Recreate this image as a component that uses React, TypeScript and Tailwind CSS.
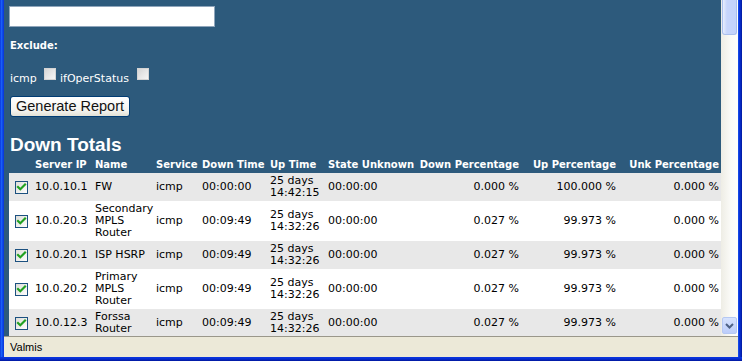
import React from "react";

const rows = [
  { ip: "10.0.10.1", name: "FW", svc: "icmp", down: "00:00:00", up: "25 days 14:42:15", unk: "00:00:00", dp: "0.000 %", upp: "100.000 %", ukp: "0.000 %" },
  { ip: "10.0.20.3", name: "Secondary MPLS Router", svc: "icmp", down: "00:09:49", up: "25 days 14:32:26", unk: "00:00:00", dp: "0.027 %", upp: "99.973 %", ukp: "0.000 %" },
  { ip: "10.0.20.1", name: "ISP HSRP", svc: "icmp", down: "00:09:49", up: "25 days 14:32:26", unk: "00:00:00", dp: "0.027 %", upp: "99.973 %", ukp: "0.000 %" },
  { ip: "10.0.20.2", name: "Primary MPLS Router", svc: "icmp", down: "00:09:49", up: "25 days 14:32:26", unk: "00:00:00", dp: "0.027 %", upp: "99.973 %", ukp: "0.000 %" },
  { ip: "10.0.12.3", name: "Forssa Router", svc: "icmp", down: "00:09:49", up: "25 days 14:32:26", unk: "00:00:00", dp: "0.027 %", upp: "99.973 %", ukp: "0.000 %" },
];

function CheckedBox() {
  return (
    <svg width="13" height="13" viewBox="0 0 13 13" className="block mx-auto">
      <defs>
        <linearGradient id="cbg" x1="0" y1="0" x2="1" y2="1">
          <stop offset="0" stopColor="#dcdcd7" />
          <stop offset="1" stopColor="#ffffff" />
        </linearGradient>
      </defs>
      <rect x="0.5" y="0.5" width="12" height="12" fill="url(#cbg)" stroke="#1c5180" />
      <path d="M3 6 L5.3 8.3 L10 3.6" fill="none" stroke="#21a121" strokeWidth="2.2" strokeLinecap="square" />
    </svg>
  );
}

function PlainBox() {
  return <div className="w-[12px] h-[12px] border border-[#d4d4d4] bg-[linear-gradient(135deg,#d6d6d6,#f6f6f6)]" />;
}

export default function App() {
  const font = { fontFamily: '"DejaVu Sans", Verdana, sans-serif' };
  return (
    <div className="w-[742px] h-[361px] flex flex-col overflow-hidden" style={font}>
      <div className="flex h-[357px]">
        <div className="w-[4px] h-full bg-[linear-gradient(to_right,#0831d9,#1c62f8,#0c48ea,#0a34d6)]" />
        <div className="w-[734px] flex flex-col">
          <div className="flex h-[336px]">
            <div className="w-[717px] h-full overflow-hidden bg-[#2d5a7c] pl-[5px] pt-[6px]">
              <div className="w-[206px] h-[21px] bg-white border border-[#8fa5bb]" />
              <div className="mt-[12px] ml-[1px] text-[10px] leading-[13px] font-bold text-white">Exclude:</div>
              <div className="mt-[16px] ml-[1px] flex items-start text-[11px] text-white h-[17px]">
                <span className="w-[34px] mt-[4px] leading-[13px]">icmp</span>
                <PlainBox />
                <span className="w-[77px] ml-[4px] mt-[4px] leading-[13px]">ifOperStatus</span>
                <PlainBox />
              </div>
              <button
                className="mt-[11px] ml-[1px] w-[120px] h-[21px] rounded-[3px] border border-[#003c74] bg-[linear-gradient(#ffffff,#f4f4f0_70%,#e3e1d6)] text-[14.5px] leading-[19px] text-[#111]"
                style={{ fontFamily: '"Liberation Sans", Arial, sans-serif' }}
              >
                Generate Report
              </button>
              <div
                className="mt-[16px] ml-[1px] text-[19px] leading-[22px] font-bold text-white"
                style={{ fontFamily: '"Liberation Sans", Arial, sans-serif' }}
              >
                Down Totals
              </div>
              <table className="mt-[1px] table-fixed border-collapse w-[712px]">
                <colgroup>
                  <col className="w-[24px]" />
                  <col className="w-[60px]" />
                  <col className="w-[61px]" />
                  <col className="w-[46px]" />
                  <col className="w-[68px]" />
                  <col className="w-[58px]" />
                  <col className="w-[91px]" />
                  <col className="w-[104px]" />
                  <col className="w-[97px]" />
                  <col className="w-[103px]" />
                </colgroup>
                <thead>
                  <tr className="text-white text-[10px] font-bold leading-[12px]">
                    <th className="h-[16px] p-0" />
                    <th className="px-[2px] py-[2px] text-left whitespace-nowrap">Server IP</th>
                    <th className="px-[2px] py-[2px] text-left whitespace-nowrap">Name</th>
                    <th className="px-[2px] py-[2px] text-left whitespace-nowrap">Service</th>
                    <th className="px-[2px] py-[2px] text-left whitespace-nowrap">Down Time</th>
                    <th className="px-[2px] py-[2px] text-left whitespace-nowrap">Up Time</th>
                    <th className="px-[2px] py-[2px] text-left whitespace-nowrap">State Unknown</th>
                    <th className="px-[2px] py-[2px] text-right whitespace-nowrap">Down Percentage</th>
                    <th className="px-[2px] py-[2px] text-right whitespace-nowrap">Up Percentage</th>
                    <th className="px-[2px] py-[2px] text-right whitespace-nowrap">Unk Percentage</th>
                  </tr>
                </thead>
                <tbody className="text-[11px] leading-[12px] text-black">
                  {rows.map((r, i) => (
                    <tr key={r.ip} className={i % 2 === 0 ? "bg-[#e8e8e8]" : "bg-white"}>
                      <td className="p-0 align-middle"><CheckedBox /></td>
                      <td className="px-[2px] py-[2px] align-middle whitespace-nowrap">{r.ip}</td>
                      <td className="px-[2px] py-[2px] align-middle">{r.name}</td>
                      <td className="px-[2px] py-[2px] align-middle">{r.svc}</td>
                      <td className="px-[2px] py-[2px] align-middle">{r.down}</td>
                      <td className="px-[2px] py-[2px] align-middle">{r.up}</td>
                      <td className="px-[2px] py-[2px] align-middle">{r.unk}</td>
                      <td className="px-[2px] py-[2px] align-middle text-right whitespace-nowrap">{r.dp}</td>
                      <td className="px-[2px] py-[2px] align-middle text-right whitespace-nowrap">{r.upp}</td>
                      <td className="px-[2px] py-[2px] align-middle text-right whitespace-nowrap">{r.ukp}</td>
                    </tr>
                  ))}
                </tbody>
              </table>
            </div>
            <div className="w-[17px] h-full flex flex-col bg-[linear-gradient(to_right,#eeede5,#fbfbf8_60%,#fefefc)]">
              <div className="h-[35px] mx-[1px] rounded-b-[3px] border-x border-b border-[#a9bfee] bg-[linear-gradient(to_right,#e8eefd,#c6d5fc_30%,#c3d3fc)]" />
              <div className="flex-1" />
              <div className="h-[17px] w-[15px] ml-[1px] mb-[2px] rounded-[2px] border border-[#b5c8f3] bg-[linear-gradient(#d6e2fd,#bccdfa)] flex items-center justify-center">
                <svg width="9" height="6" viewBox="0 0 9 6">
                  <path d="M1 1 L4.5 4.5 L8 1" fill="none" stroke="#4d6185" strokeWidth="2" />
                </svg>
              </div>
            </div>
          </div>
          <div
            className="h-[21px] border-t border-[#9a978a] bg-[#ece9d8] pl-[6px] text-[11px] leading-[20px] text-black"
            style={{ fontFamily: '"Liberation Sans", Tahoma, sans-serif' }}
          >
            Valmis
          </div>
        </div>
        <div className="w-[4px] h-full bg-[linear-gradient(to_right,#1a55ee,#0831d9,#0628c0,#00179a)]" />
      </div>
      <div className="h-[4px] w-full bg-[linear-gradient(#0a36dc,#0831d9,#0626c0,#00179a)]" />
    </div>
  );
}
